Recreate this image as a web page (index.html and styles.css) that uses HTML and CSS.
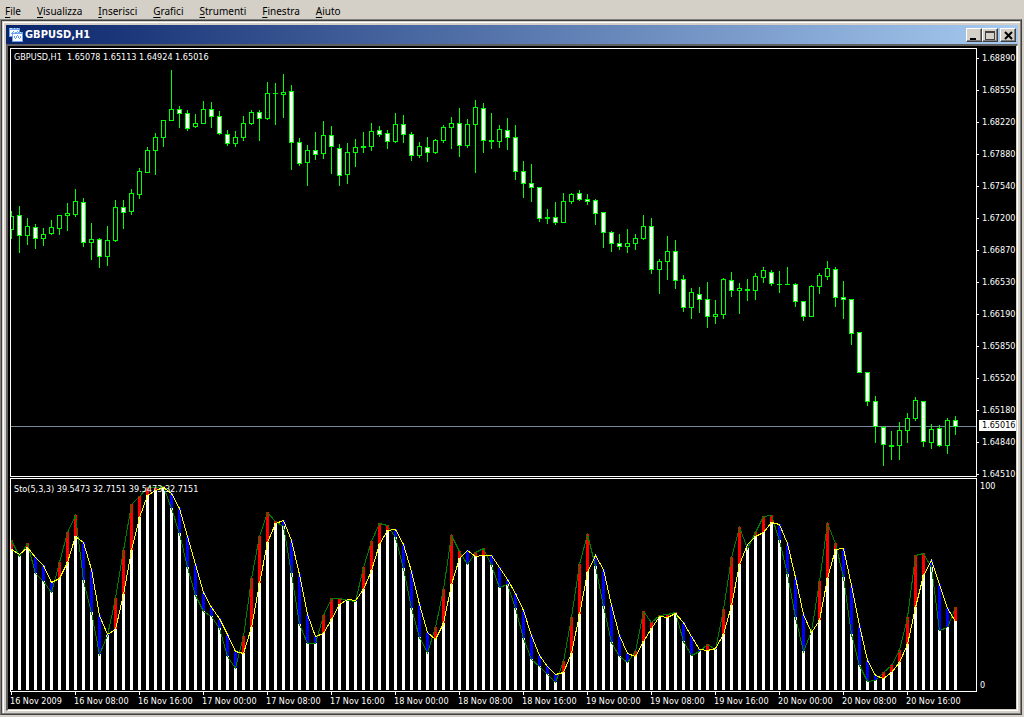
FILE: index.html
```html
<!DOCTYPE html>
<html lang="it">
<head>
<meta charset="utf-8">
<title>GBPUSD,H1</title>
<link rel="stylesheet" href="styles.css">
</head>
<body>
<nav class="menubar">
  <button class="menu"><u>F</u>ile</button>
  <button class="menu"><u>V</u>isualizza</button>
  <button class="menu"><u>I</u>nserisci</button>
  <button class="menu"><u>G</u>rafici</button>
  <button class="menu"><u>S</u>trumenti</button>
  <button class="menu"><u>F</u>inestra</button>
  <button class="menu"><u>A</u>iuto</button>
</nav>
<main class="window">
  <div class="window-inner">
    <header class="titlebar">
      <svg class="title-icon" width="14" height="14" viewBox="0 0 14 14" shape-rendering="crispEdges" aria-hidden="true">
        <rect x="0" y="0" width="11" height="9" fill="#6aa2f4"/>
        <rect x="1" y="2" width="9" height="6" fill="#fff"/>
        <path d="M1 0h2v1h-2zM5 0h1v1h-1zM8 0h1v1h-1z" fill="#cfe2ff"/>
        <path d="M2 5h1v1h-1zM3 4h1v1h-1zM4 3h1v1h-1zM6 4h1v1h-1zM8 3h1v1h-1z" fill="#6aa2f4"/>
        <rect x="3" y="4" width="11" height="10" fill="#6aa2f4"/>
        <rect x="4" y="6" width="9" height="7" fill="#fff"/>
        <path d="M4 4h2v1h-2zM8 4h1v1h-1zM11 4h1v1h-1z" fill="#cfe2ff"/>
        <path d="M5 8h1v2h-1zM6 10h1v1h-1zM7 8h1v2h-1zM8 7h1v1h-1zM9 8h1v2h-1zM10 10h1v1h-1zM11 8h1v2h-1z" fill="#6a9af0"/>
      </svg>
      <h1 class="title">GBPUSD,H1</h1>
      <button class="winbtn" aria-label="Riduci a icona"><svg width="10" height="10" viewBox="0 0 10 10" shape-rendering="crispEdges"><path d="M1 8h6v2h-6z"/></svg></button>
      <button class="winbtn" aria-label="Ingrandisci"><svg width="10" height="10" viewBox="0 0 10 10" shape-rendering="crispEdges"><path d="M0 1h10v9h-10zM1 3v6h8v-6z" fill-rule="evenodd" fill="#404040"/></svg></button>
      <button class="winbtn winbtn-close" aria-label="Chiudi"><svg width="10" height="10" viewBox="0 0 10 10"><path d="M2 2l7 7M9 2l-7 7" stroke="#000" stroke-width="2"/></svg></button>
    </header>
    <section class="client">
      <div class="pane-row price-row">
        <div class="pane">
          <svg id="price" class="plot" shape-rendering="crispEdges"></svg>
          <p class="caption">GBPUSD,H1&nbsp; 1.65078 1.65113 1.64924 1.65016</p>
        </div>
        <div class="axis" id="priceAxis"><span class="bid">1.65016</span></div>
      </div>
      <div class="pane-row sto-row">
        <div class="pane">
          <svg id="sto" class="plot" shape-rendering="crispEdges"></svg>
          <p class="caption sto-caption">Sto(5,3,3) 39.5473 32.7151 39.5473 32.7151</p>
        </div>
        <div class="axis sto-axis"><span>100</span><span>0</span></div>
      </div>
      <div class="dates" id="dates"></div>
    </section>
  </div>
</main>
<script src="chart.js"></script>
</body>
</html>
```
FILE: styles.css
```css
* { box-sizing: border-box; }
body {
  margin: 0;
  height: 100vh;
  display: flex;
  flex-direction: column;
  background: #d4d0c8;
  color: #000;
  font-family: "DejaVu Sans Condensed", "DejaVu Sans", sans-serif;
  font-stretch: condensed;
  font-size: 11px;
  overflow: hidden;
}
button { font: inherit; color: inherit; }
.menubar {
  display: flex;
  gap: 16px;
  height: 19px;
  padding: 3px 5px 0;
}
.menu {
  border: 0;
  padding: 0;
  background: none;
  font-size: 10px;
  line-height: 16px;
  font-family: "Noto Sans", sans-serif;
  font-stretch: normal;
}
.menu u { text-underline-offset: 2px; }
.window {
  flex: 1;
  display: flex;
  margin: 0 2px 2px 0;
  border: 1px solid;
  border-color: #808080 #404040 #404040 #808080;
}
.window-inner {
  flex: 1;
  display: flex;
  flex-direction: column;
  border: 1px solid;
  border-color: #404040 #808080 #808080 #404040;
  padding: 4px 2px 2px 4px;
  box-shadow: inset 1px 1px #d4d0c8, inset 2px 2px #fff;
}
.titlebar {
  display: flex;
  align-items: center;
  height: 19px;
  padding: 0 2px 0 3px;
  background: linear-gradient(90deg, #0a246a, #a6caf0);
  color: #fff;
}
.title {
  flex: 1;
  margin: 0 0 0 2px;
  font-size: 11px;
  line-height: 16px;
  font-weight: bold;
}
.winbtn {
  width: 16px;
  height: 14px;
  padding: 1px 2px;
  display: flex;
  background: #d4d0c8;
  border: 1px solid;
  border-color: #fff #404040 #404040 #fff;
  box-shadow: inset -1px -1px #808080;
}
.winbtn-close { margin-left: 2px; }
.client {
  flex: 1;
  display: flex;
  flex-direction: column;
  background: #000;
  color: #fff;
  border: 2px solid;
  border-width: 2px 1px 1px 2px;
  border-color: #606060 #fff #fff #606060;
  box-shadow: inset -1px -1px #d4d0c8;
  padding: 2px 1px 1px 2px;
  font-size: 9px;
  line-height: 12px;
}
.pane-row { display: flex; }
.price-row { flex: 1; margin-bottom: 1px; }
.sto-row { height: 214px; }
.pane {
  flex: 1;
  position: relative;
  border: 1px solid #fff;
  overflow: hidden;
}
.plot { display: block; width: 100%; height: 100%; }
.caption {
  position: absolute;
  left: 3px;
  top: 2px;
  margin: 0;
}
.sto-caption { top: 4px; }
.axis {
  width: 39px;
  position: relative;
  display: flex;
  flex-direction: column;
  gap: 20px;
  padding-top: 4px;
  height: 0;
}
.tick { display: flex; align-items: center; gap: 3px; }
.tick::before { content: ""; width: 2px; height: 1px; background: #fff; }
.bid {
  position: absolute;
  left: 2px;
  right: 0;
  top: 372px;
  padding-left: 3px;
  line-height: 11px;
  background: #fff;
  color: #000;
}
.sto-axis {
  height: 100%;
  justify-content: space-between;
  padding: 2px 3px 1px;
}
.dates { height: 17px; display: flex; }
.date {
  flex: 0 0 64px;
  padding-top: 3px;
  white-space: nowrap;
  background: linear-gradient(#fff, #fff) 1px 0 / 1px 3px no-repeat;
}
```
FILE: chart.js
```js
// One row per bar: high, body top, body bottom, low, falling (1) or rising (0).
const candles = `211,216,230,239,0 206,215,236,253,1 218,226,236,245,0 224,227,239,249,1 228,234,239,246,0
220,227,234,235,0 215,215,229,235,0 203,213,216,231,0 189,201,215,217,0 198,202,243,247,1
223,239,243,260,0 238,239,257,268,1 226,240,257,266,0 200,207,241,242,0 200,207,213,229,1
189,193,212,215,0 168,171,195,199,0 147,150,173,173,0 133,137,151,175,0 120,120,138,147,0
70,109,121,121,0 106,109,114,128,1 110,113,129,131,1 114,123,127,128,0 101,109,124,124,0
102,109,117,128,1 111,116,134,135,1 130,134,144,146,1 131,137,144,147,0 116,123,138,141,0
110,112,124,125,0 110,112,119,141,1 82,93,119,120,0 83,93,94,125,0 74,92,95,118,0
85,91,143,170,1 138,142,164,166,1 145,150,163,186,0 132,150,155,160,1 121,135,154,159,0
126,135,147,174,1 144,148,176,186,1 143,152,175,184,0 139,147,153,167,0 132,146,148,153,1
123,131,147,151,0 126,130,135,137,1 130,133,142,149,1 113,124,142,143,0 115,124,135,143,1
132,134,156,161,1 142,146,156,158,0 137,147,153,162,1 139,140,153,154,0 125,127,141,143,0
117,123,128,149,0 108,123,146,157,1 119,124,146,148,0 100,107,125,173,0 103,108,141,153,1
113,140,142,149,1 125,129,142,148,0 118,130,138,150,1 125,137,172,180,1 161,171,184,198,1
164,183,188,202,1 187,187,219,222,1 209,217,219,224,1 202,217,223,225,1 193,201,223,223,0
193,194,202,204,0 190,193,200,201,1 194,199,202,205,1 199,200,214,225,1 212,212,233,248,1
231,232,244,252,1 234,243,247,250,1 229,243,247,253,0 234,238,244,250,0 215,226,239,240,0
218,226,270,274,1 259,261,270,294,0 236,251,262,280,0 240,251,281,289,1 275,279,308,312,1
288,292,308,319,0 287,294,300,313,1 282,299,317,328,1 300,314,317,324,0 278,279,315,319,0
272,280,291,297,1 283,288,291,314,0 279,289,291,301,1 273,276,291,300,0 267,270,278,283,0
270,272,284,286,1 271,284,285,293,0 267,284,285,285,0 283,284,302,307,1 301,301,317,321,1
285,286,317,317,0 273,275,287,294,0 261,268,277,280,0 267,269,298,307,1 281,297,300,319,1
299,299,334,345,1 332,332,373,373,1 372,372,402,406,1 396,401,427,443,1 426,427,445,466,1
431,445,447,460,1 422,430,446,460,0 413,418,431,443,0 397,400,419,421,0 401,401,442,447,1
424,429,443,449,0 425,428,446,447,1 418,420,446,454,0 416,420,427,435,1`
  .split(/\s+/).map(r => r.split(",").map(Number));

// Stochastic: %K then %D for each bar.
const sto = `540,549 556,554 543,547 573,557 581,565 592,582 562,578 532,562 515,536 580,542
612,569 654,615 635,634 598,629 550,594 504,550 496,517 487,495 487,490 486,487
508,493 533,508 567,536 595,564 611,592 616,607 628,618 656,634 668,651 636,653
578,627 536,583 512,542 521,523 526,520 573,540 624,574 643,614 643,636 615,633
598,619 598,604 600,599 601,600 567,589 541,570 523,544 525,530 537,529 568,544
608,571 637,604 652,632 627,639 589,623 535,584 551,558 564,550 552,556 548,555
565,555 587,567 584,579 608,593 638,610 659,635 666,655 674,666 682,674 661,672
617,653 564,614 534,572 566,555 606,569 642,605 656,635 662,653 651,656 611,641
622,628 615,616 614,617 612,613 641,622 655,636 651,649 644,650 649,648 609,634
557,605 527,564 548,544 532,536 516,532 515,522 540,524 574,543 617,577 651,614
631,632 581,620 523,578 543,549 577,548 634,585 665,625 681,660 680,675 672,678
665,672 650,662 617,644 555,607 553,575 567,560 630,584 627,608 607,621`
  .split(/\s+/).map(r => r.split(",").map(Number));

const STEP = 8;
const PRICE_TOP = 49;
const STO_TOP = 479;
const STO_BASE = 690;

const rect = (x, y, w, h, fill) =>
  h > 0 ? `<rect x="${x}" y="${y}" width="${w}" height="${h}" fill="${fill}"/>` : "";

let out = `<rect x="0" y="377" width="100%" height="1" fill="#778899"/>`;
candles.forEach(([high, top, bottom, low, falling], i) => {
  const x = i * STEP;
  out += rect(x, high - PRICE_TOP, 1, low - high, "#00ff00");
  out += rect(x - 2, top - PRICE_TOP, 5, bottom - top, "#00ff00");
  out += rect(x - 1, top - PRICE_TOP + 1, 3, bottom - top - 2, falling ? "#fff" : "#000");
});
document.getElementById("price").innerHTML = out;

out = "";
sto.forEach(([k, d], i) => {
  const x = i * STEP - 1;
  const upper = Math.min(k, d);
  const lower = Math.max(k, d);
  out += rect(x, upper - STO_TOP, 3, lower - upper, k < d ? "#ff0000" : "#0000ff");
  out += rect(x, lower - STO_TOP, 3, STO_BASE - lower, "#fff");
});
const line = (n, color) =>
  `<polyline fill="none" stroke="${color}" stroke-width="1" points="${sto.map((v, i) => `${i * STEP + 0.5},${v[n] - STO_TOP + 0.5}`).join(" ")}"/>`;
document.getElementById("sto").innerHTML = out + line(0, "#008000") + line(1, "#ffff00");

const prices = ["1.68890", "1.68550", "1.68220", "1.67880", "1.67540", "1.67200", "1.66870",
  "1.66530", "1.66190", "1.65850", "1.65520", "1.65180", "1.64840", "1.64510"];
document.getElementById("priceAxis").insertAdjacentHTML("afterbegin",
  prices.map(p => `<span class="tick">${p}</span>`).join(""));

const dates = ["16 Nov 2009", "16 Nov 08:00", "16 Nov 16:00", "17 Nov 00:00", "17 Nov 08:00",
  "17 Nov 16:00", "18 Nov 00:00", "18 Nov 08:00", "18 Nov 16:00", "19 Nov 00:00",
  "19 Nov 08:00", "19 Nov 16:00", "20 Nov 00:00", "20 Nov 08:00", "20 Nov 16:00"];
document.getElementById("dates").innerHTML = dates.map(d => `<span class="date">${d}</span>`).join("");
```
